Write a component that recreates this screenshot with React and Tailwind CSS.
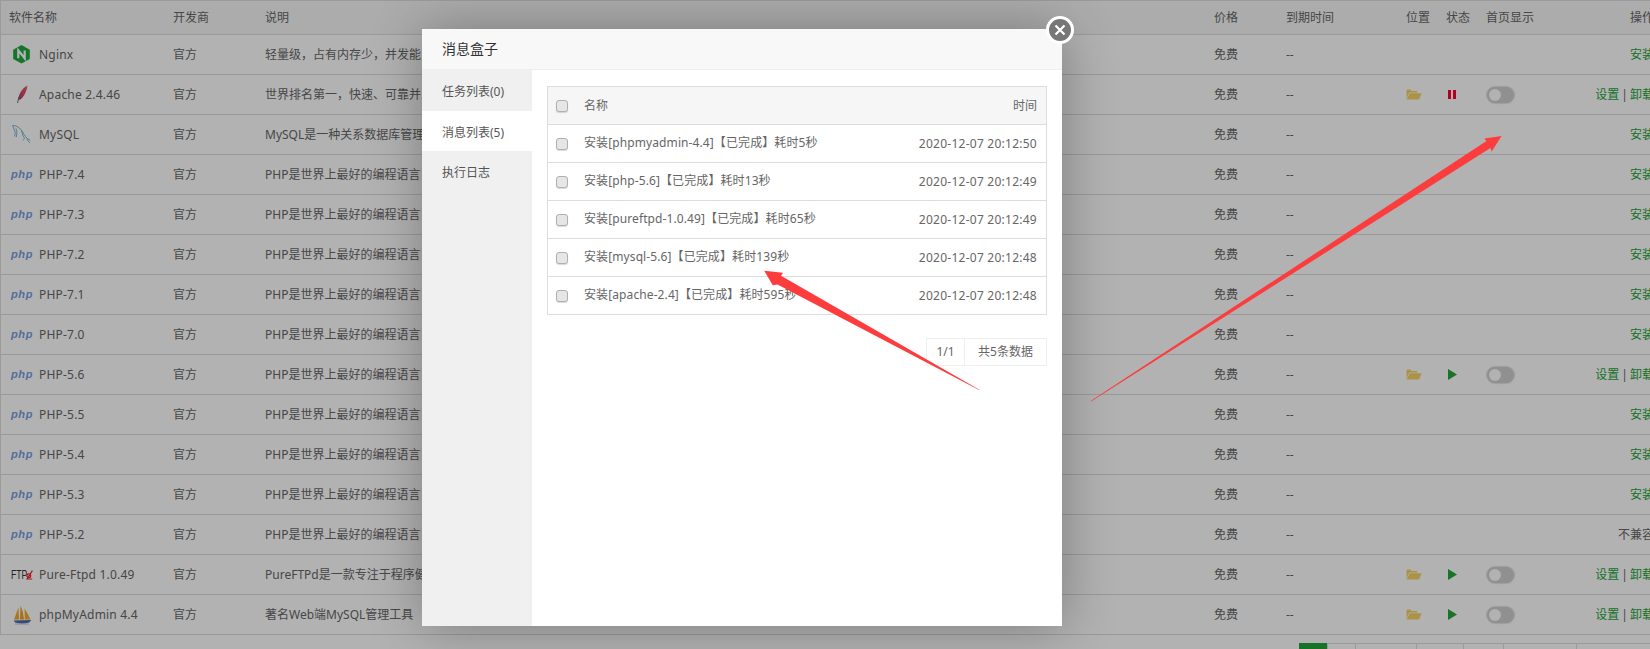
import React from "react";

const PHP_DESC = "PHP是世界上最好的编程语言";

function NginxIcon() {
  return (
    <svg width="24" height="20" viewBox="0 0 24 20" className="shrink-0">
      <polygon points="12.5,0 20.8,4.7 20.8,13.9 12.5,18.6 4.2,13.9 4.2,4.7" fill="#1fa83c" />
      <path d="M9.3 13.3V5.4L15.7 13.3V5.4" fill="none" stroke="#fff" strokeWidth="2.2" />
    </svg>
  );
}

function ApacheIcon() {
  return (
    <svg width="24" height="20" viewBox="0 0 24 20" className="shrink-0">
      <defs>
        <linearGradient id="feather" x1="0" y1="1" x2="1" y2="0">
          <stop offset="0" stopColor="#8c4a78" />
          <stop offset="0.45" stopColor="#d8466c" />
          <stop offset="0.85" stopColor="#d65a68" />
          <stop offset="1" stopColor="#f4c070" />
        </linearGradient>
      </defs>
      <path d="M18.6 0.2C15.5 1.8 12.4 5 10.6 9C9.8 10.9 9.3 12.7 9.2 14.4L11 14.8C13.6 13.2 16 9.6 17.2 5.8C17.9 3.6 18.4 1.8 18.6 0.2Z" fill="url(#feather)" />
      <path d="M9.8 12L8.6 18" stroke="#6f6f7a" strokeWidth="1" fill="none" />
    </svg>
  );
}

function MysqlIcon() {
  return (
    <svg width="24" height="20" viewBox="0 0 24 20" className="shrink-0" fill="none" stroke="#6ea9c9" strokeWidth="0.9">
      <path d="M3.6 0.6C6.8 0.4 10 1.8 12.4 5.2C14.4 8 15.6 11 18 13.2C19.2 14.2 20.4 14.8 21.2 15.4" />
      <path d="M3.6 0.6C4.4 3 5.6 5.4 6.4 7.4C5.8 8.6 5.6 9.8 5.8 11.4" />
      <path d="M7 3.4C8 6.4 8 9 7.2 12.2" />
      <path d="M12.4 5.2C13.2 8.4 14 11.4 15.6 13.4C15 14 14.4 14.6 14.2 15.4" />
      <path d="M17.8 13.6C18.4 15.2 19.6 16.6 20.8 17.8" />
    </svg>
  );
}

function PhpIcon() {
  return (
    <span className="w-[30px] shrink-0 pl-[2px] font-['Liberation_Sans',sans-serif] text-[11px] leading-none font-bold tracking-[0.6px] italic text-[#7c9cdc]">
      php
    </span>
  );
}

function FtpIcon() {
  return (
    <span className="relative flex h-[20px] w-[30px] shrink-0 items-center pl-[2px] font-['Liberation_Sans',sans-serif] text-[12px] leading-none text-[#333]">
      <span className="origin-left scale-x-[0.72]">FTP</span>
      <svg width="7" height="10" viewBox="0 0 7 10" className="absolute top-[5px] left-[17px]" fill="none" stroke="#f01c28" strokeWidth="1.2">
        <path d="M6.4 0.6L1 9H6.2" />
        <circle cx="2.8" cy="5.8" r="1.9" />
      </svg>
    </span>
  );
}

function PmaIcon() {
  return (
    <svg width="24" height="20" viewBox="0 0 24 20" className="shrink-0">
      <path d="M5 14.6L8 6.6L9.4 2.6L10.2 14.6Z" fill="#f2ab2c" />
      <path d="M11 14.6L11.6 0.4C13.4 4.6 14.4 9.6 15 14.6Z" fill="#eea023" />
      <path d="M15.8 14.6L15.6 3.6C17.6 7 19.6 10.6 21.6 14.6Z" fill="#f2ab2c" />
      <path d="M4.6 15.4L22.4 15L20.2 17.6C15 18.8 9 18.6 6.2 17.6Z" fill="#4d6aa6" />
      <path d="M6 19H20" stroke="#9fb0d0" strokeWidth="0.8" />
    </svg>
  );
}

function FolderIcon() {
  return (
    <svg width="16" height="11" viewBox="0 0 16 11">
      <path d="M0.6 10V1.4C0.6 0.9 1 0.6 1.4 0.6H4.4L5.6 2H11.2V3.4H3.2L0.6 10Z" fill="#f6d260" />
      <path d="M3.8 4.2H15.6L13 10.6H0.8Z" fill="#f6d260" />
    </svg>
  );
}

function PauseIcon() {
  return (
    <span className="ml-[2px] flex h-[9px] w-[8px] justify-between">
      <span className="w-[3px] bg-[#ff0030]" />
      <span className="w-[3px] bg-[#ff0030]" />
    </span>
  );
}

function PlayIcon() {
  return (
    <svg width="9" height="11" viewBox="0 0 9 11" className="ml-[2px]">
      <polygon points="0,0 9,5.5 0,11" fill="#20a53a" />
    </svg>
  );
}

function Toggle() {
  return (
    <span className="ml-[1px] flex h-[16px] w-[27px] items-center rounded-full bg-[#cecece] pl-[2px] shadow-[0_0_1px_1px_rgba(0,0,0,0.12)]">
      <span className="h-[12px] w-[12px] rounded-full bg-white" />
    </span>
  );
}

const software = [
  { name: "Nginx", icon: <NginxIcon />, desc: "轻量级，占有内存少，并发能力强", op: "install" },
  { name: "Apache 2.4.46", icon: <ApacheIcon />, desc: "世界排名第一，快速、可靠并且可扩展", op: "manage", state: "pause" },
  { name: "MySQL", icon: <MysqlIcon />, desc: "MySQL是一种关系数据库管理系统", op: "install" },
  { name: "PHP-7.4", icon: <PhpIcon />, desc: PHP_DESC, op: "install" },
  { name: "PHP-7.3", icon: <PhpIcon />, desc: PHP_DESC, op: "install" },
  { name: "PHP-7.2", icon: <PhpIcon />, desc: PHP_DESC, op: "install" },
  { name: "PHP-7.1", icon: <PhpIcon />, desc: PHP_DESC, op: "install" },
  { name: "PHP-7.0", icon: <PhpIcon />, desc: PHP_DESC, op: "install" },
  { name: "PHP-5.6", icon: <PhpIcon />, desc: PHP_DESC, op: "manage", state: "play" },
  { name: "PHP-5.5", icon: <PhpIcon />, desc: PHP_DESC, op: "install" },
  { name: "PHP-5.4", icon: <PhpIcon />, desc: PHP_DESC, op: "install" },
  { name: "PHP-5.3", icon: <PhpIcon />, desc: PHP_DESC, op: "install" },
  { name: "PHP-5.2", icon: <PhpIcon />, desc: PHP_DESC, op: "none" },
  { name: "Pure-Ftpd 1.0.49", icon: <FtpIcon />, desc: "PureFTPd是一款专注于程序健壮和软件安全的FTP服务器", op: "manage", state: "play" },
  { name: "phpMyAdmin 4.4", icon: <PmaIcon />, desc: "著名Web端MySQL管理工具", op: "manage", state: "play" },
];

const messages = [
  ["安装[phpmyadmin-4.4]【已完成】耗时5秒", "2020-12-07 20:12:50"],
  ["安装[php-5.6]【已完成】耗时13秒", "2020-12-07 20:12:49"],
  ["安装[pureftpd-1.0.49]【已完成】耗时65秒", "2020-12-07 20:12:49"],
  ["安装[mysql-5.6]【已完成】耗时139秒", "2020-12-07 20:12:48"],
  ["安装[apache-2.4]【已完成】耗时595秒", "2020-12-07 20:12:48"],
];

const COLS = "grid grid-cols-[164px_92px_949px_72px_120px_40px_40px_100px_1fr] items-center";

function Checkbox() {
  return <span className="h-[12px] w-[12px] shrink-0 rounded-[3px] border border-[#b0b0b0] bg-[#e6e6e6] shadow-[0_1px_1px_rgba(0,0,0,0.15)]" />;
}

function Row({ item }) {
  return (
    <div className={`${COLS} h-[40px] border-b border-[#ddd] text-[#666]`}>
      <div className="flex items-center pl-[8px]">
        {item.icon.type === PhpIcon || item.icon.type === FtpIcon ? item.icon : (
          <span className="mr-[6px] flex">{item.icon}</span>
        )}
        <span className="tracking-[0.2px] whitespace-nowrap">{item.name}</span>
      </div>
      <div className="pl-[8px]">官方</div>
      <div className="truncate pl-[8px]">{item.desc}</div>
      <div className="pl-[8px]">免费</div>
      <div className="pl-[8px]">--</div>
      <div className="flex pl-[8px]">{item.state && <FolderIcon />}</div>
      <div className="flex pl-[8px]">
        {item.state === "pause" && <PauseIcon />}
        {item.state === "play" && <PlayIcon />}
      </div>
      <div className="flex pl-[8px]">{item.state && <Toggle />}</div>
      <div className="pr-[8px] text-right whitespace-nowrap">
        {item.op === "install" && <a className="text-[#20a53a]">安装</a>}
        {item.op === "none" && <span>不兼容</span>}
        {item.op === "manage" && (
          <>
            <a className="text-[#20a53a]">设置</a>
            <span className="px-[2px]">|</span>
            <a className="text-[#20a53a]">卸载</a>
          </>
        )}
      </div>
    </div>
  );
}

function SoftwareTable() {
  return (
    <div className="w-[1662px] border-t border-l border-[#ddd]">
      <div className={`${COLS} h-[34px] border-b border-[#ddd] bg-[#f6f6f6] pt-[1px] text-[#666]`}>
        {["软件名称", "开发商", "说明", "价格", "到期时间", "位置", "状态", "首页显示"].map((h) => (
          <div key={h} className="pl-[8px] whitespace-nowrap">{h}</div>
        ))}
        <div className="pr-[8px] text-right">操作</div>
      </div>
      {software.map((s) => (
        <Row key={s.name} item={s} />
      ))}
    </div>
  );
}

function Pager() {
  const widths = ["w-[61px]", "w-[47px]", "w-[40px]", "w-[73px]", "w-[80px]"];
  return (
    <div className="mt-[8px] ml-[1299px] flex h-[30px] w-max">
      <span className="w-[28px] bg-[#20a53a]" />
      <span className="w-[28px] border-t border-l border-[#ddd]" />
      {widths.map((w, i) => (
        <span key={i} className={`${w} border-t border-l border-[#ddd]`} />
      ))}
    </div>
  );
}

function MessageBox() {
  return (
    <div className="absolute top-[29px] left-[422px] flex h-[597px] w-[640px] flex-col bg-white shadow-[1px_1px_50px_rgba(0,0,0,0.3)]">
      <div className="flex h-[41px] shrink-0 items-center border-b border-[#eee] bg-[#f8f8f8] pb-[2px] pl-[20px] text-[14px] text-[#333]">
        消息盒子
      </div>
      <div className="flex min-h-0 flex-1">
        <div className="w-[110px] shrink-0 bg-[#f0f0f0] text-[#555]">
          <div className="flex h-[41px] items-center pt-[3px] pl-[20px]">任务列表(0)</div>
          <div className="flex h-[40px] items-center bg-white pt-[3px] pl-[20px]">消息列表(5)</div>
          <div className="flex h-[40px] items-center pt-[3px] pl-[20px]">执行日志</div>
        </div>
        <div className="flex-1 pt-[16px] pr-[15px] pl-[15px]">
          <div className="border-x border-t border-[#ddd] text-[#666]">
            <div className="flex h-[38px] items-center border-b border-[#ddd] bg-[#f6f6f6] pr-[9px] pl-[8px]">
              <Checkbox />
              <span className="ml-[16px] flex-1">名称</span>
              <span>时间</span>
            </div>
            {messages.map(([title, time]) => (
              <div key={title} className="flex h-[38px] items-center border-b border-[#ddd] pr-[9px] pl-[8px]">
                <Checkbox />
                <span className="ml-[16px] flex-1 pb-[2px] tracking-[0.1px] whitespace-nowrap">{title}</span>
                <span className="tracking-[0.25px] whitespace-nowrap">{time}</span>
              </div>
            ))}
          </div>
          <div className="mt-[23px] flex justify-end text-[#666]">
            <div className="flex h-[28px] border border-[#eee]">
              <span className="flex w-[38px] items-center justify-center border-r border-[#eee]">1/1</span>
              <span className="flex w-[81px] items-center justify-center">共5条数据</span>
            </div>
          </div>
        </div>
      </div>
      <button className="absolute top-[-13px] right-[-12px] flex h-[28px] w-[28px] items-center justify-center rounded-full border-[3px] border-white bg-[#777]">
        <svg width="12" height="12" viewBox="0 0 12 12" fill="none" stroke="#fff" strokeWidth="2.2">
          <path d="M1.5 1.5L10.5 10.5M10.5 1.5L1.5 10.5" />
        </svg>
      </button>
    </div>
  );
}

function Arrows() {
  return (
    <svg width="1650" height="649" viewBox="0 0 1650 649" className="pointer-events-none absolute top-0 left-0">
      <polygon fill="#fd3d3d" points="1090.6,401 1486.5,141 1484.3,138.5 1501.6,136 1491.6,151.6 1490.4,148 1091,401.6" />
      <polygon fill="#fd3d3d" points="979.4,389.7 781,275.8 783,272.7 764.2,270.7 772.8,285.3 777.5,284.5 979,390" />
    </svg>
  );
}

export default function App() {
  return (
    <div className="relative h-[649px] w-[1650px] overflow-hidden bg-white font-['Noto_Sans','Noto_Sans_CJK_SC',sans-serif] text-[12px]">
      <SoftwareTable />
      <Pager />
      <div className="absolute inset-0 bg-black/30" />
      <MessageBox />
      <Arrows />
    </div>
  );
}
